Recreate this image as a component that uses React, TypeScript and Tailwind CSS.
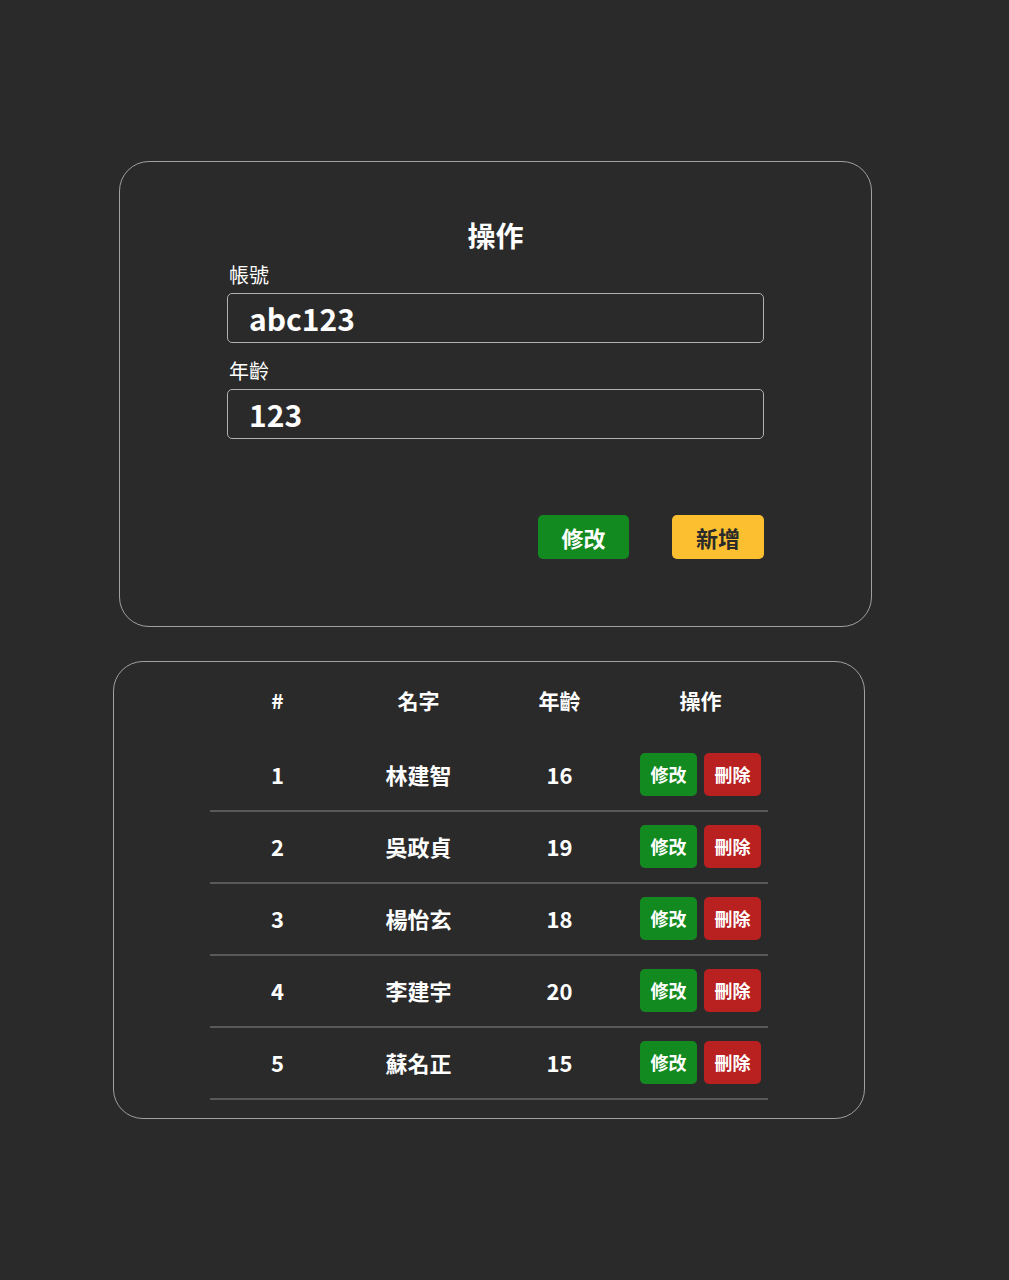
import React from 'react';

const rows = [
  { id: 1, name: '林建智', age: 16 },
  { id: 2, name: '吳政貞', age: 19 },
  { id: 3, name: '楊怡玄', age: 18 },
  { id: 4, name: '李建宇', age: 20 },
  { id: 5, name: '蘇名正', age: 15 },
];

const font = { fontFamily: '"Noto Sans CJK TC", "Noto Sans", sans-serif' };

export default function App() {
  return (
    <div className="min-h-[1280px] bg-[#2a2a2a] pt-[161px] text-white" style={font}>
      {/* form card */}
      <div className="ml-[119px] w-[753px] h-[466px] rounded-[30px] border border-[#a0a0a0] px-[107px] pt-[53px]">
        <h2 className="text-center text-[28px] font-bold leading-[40px]">操作</h2>
        <label className="mt-[7px] block pl-[2px] text-[20px] leading-[26px]">帳號</label>
        <input
          className="mt-[5px] block h-[50px] w-full rounded-[5px] border border-[#b0b0b0] bg-transparent pl-[21px] text-[30px] font-semibold text-white outline-none"
          defaultValue="abc123"
        />
        <label className="mt-[15px] block pl-[2px] text-[20px] leading-[26px]">年齡</label>
        <input
          className="mt-[5px] block h-[50px] w-full rounded-[5px] border border-[#b0b0b0] bg-transparent pl-[21px] text-[30px] font-semibold text-white outline-none"
          defaultValue="123"
        />
        <div className="mt-[76px] flex justify-end gap-[43px]">
          <button className="h-[44px] w-[91px] rounded-[5px] bg-[#138a1f] text-[22px] font-bold text-white">修改</button>
          <button className="h-[44px] w-[92px] rounded-[5px] bg-[#fbbf30] text-[22px] font-bold text-[#2a2a2a]">新增</button>
        </div>
      </div>

      {/* table card */}
      <div className="mt-[34px] ml-[113px] w-[752px] h-[458px] rounded-[30px] border border-[#a0a0a0] pl-[96px] pr-[96px]">
        <div className="w-[558px]">
          <div className="-mx-[3px] grid h-[78px] grid-cols-4 items-center text-center text-[21px] font-bold">
            <div>#</div>
            <div>名字</div>
            <div>年齡</div>
            <div>操作</div>
          </div>
          {rows.map((r) => (
            <div key={r.id} className="h-[72px] border-b-2 border-[#585858]">
              <div className="-mx-[3px] grid h-full grid-cols-4 items-center pb-[2px] text-center text-[22px] font-semibold">
                <div>{r.id}</div>
                <div>{r.name}</div>
                <div>{r.age}</div>
                <div className="flex justify-center gap-[7px]">
                  <button className="h-[43px] w-[57px] rounded-[5px] bg-[#138a1f] text-[18px] font-bold text-white">修改</button>
                  <button className="h-[43px] w-[57px] rounded-[5px] bg-[#b92020] text-[18px] font-bold text-white">刪除</button>
                </div>
              </div>
            </div>
          ))}
        </div>
      </div>
    </div>
  );
}
